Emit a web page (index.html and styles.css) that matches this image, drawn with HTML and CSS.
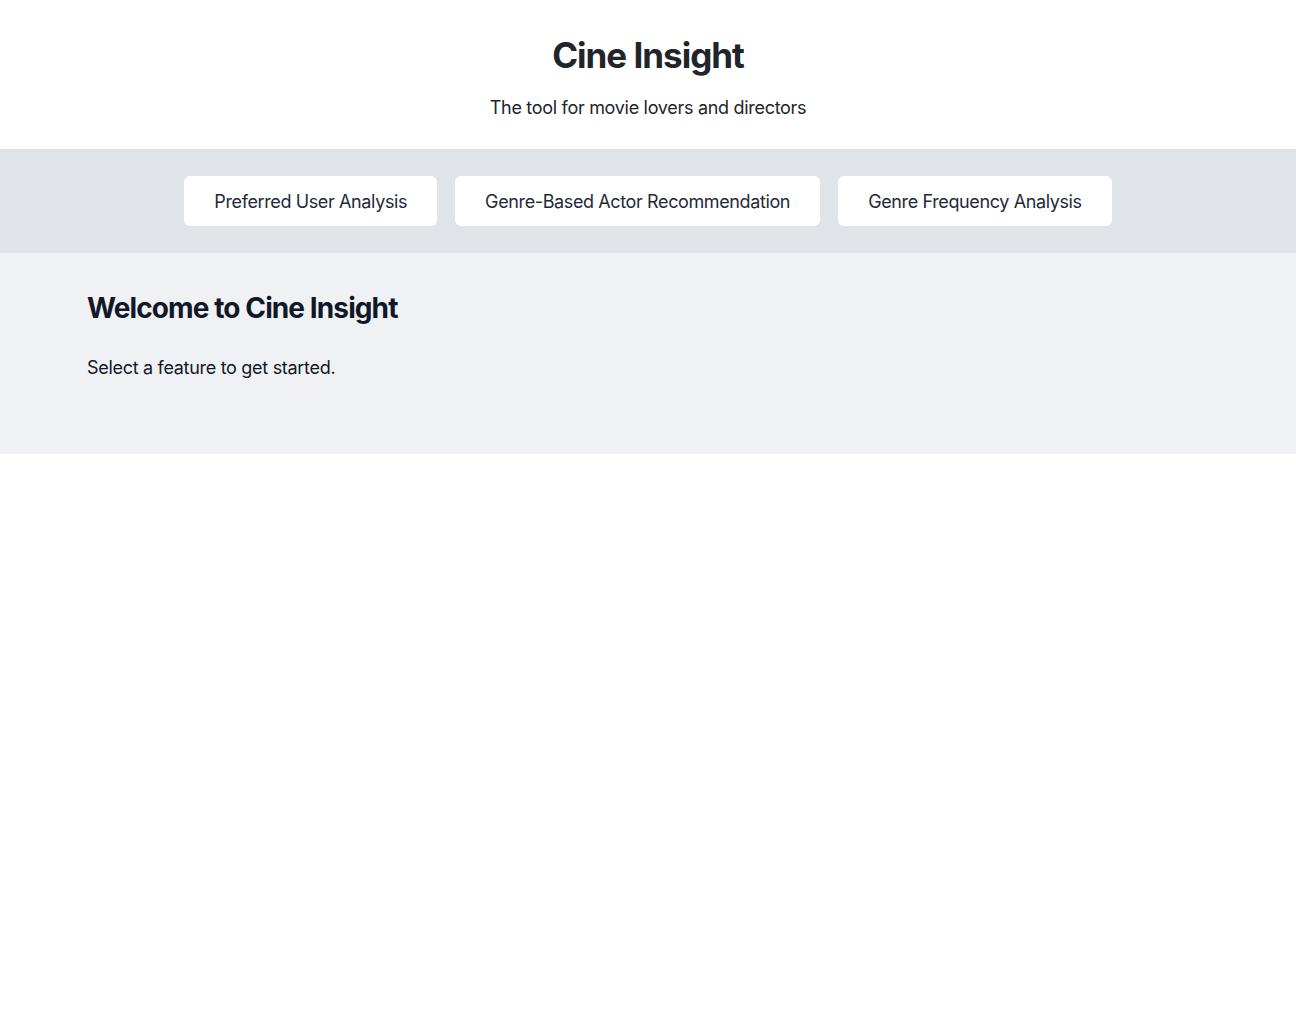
FILE: index.html
```html
<!DOCTYPE html>
<html lang="en">
<head>
<meta charset="utf-8">
<title>Cine Insight</title>
<link rel="stylesheet" href="styles.css">
</head>
<body>
<header class="site-header">
  <h1 class="site-title">Cine Insight</h1>
  <p class="site-subtitle">The tool for movie lovers and directors</p>
</header>
<nav class="feature-nav">
  <button class="feature-btn">Preferred User Analysis</button>
  <button class="feature-btn">Genre-Based Actor Recommendation</button>
  <button class="feature-btn">Genre Frequency Analysis</button>
</nav>
<main class="content">
  <div class="container">
    <h2 class="welcome-title">Welcome to Cine Insight</h2>
    <p class="welcome-text">Select a feature to get started.</p>
  </div>
</main>
</body>
</html>
```
FILE: styles.css
```css
* { box-sizing: border-box; }
html, body {
  margin: 0;
  padding: 0;
  background: #ffffff;
  font-family: Inter, "Noto Sans", sans-serif;
}
.site-header {
  text-align: center;
  padding: 33px 0 27px;
  background: #ffffff;
}
.site-title {
  margin: 0;
  font-size: 35px;
  line-height: 44px;
  font-weight: 700;
  color: #212529;
  letter-spacing: -1px;
}
.site-subtitle {
  margin: 17px 0 0;
  font-size: 18px;
  line-height: 28px;
  color: #212529;
  letter-spacing: -0.3px;
}
.feature-nav {
  display: flex;
  justify-content: center;
  gap: 18px;
  padding: 27px 0;
  background: #e0e4e9;
}
.feature-btn {
  font-family: Inter, "Noto Sans", sans-serif;
  font-size: 18px;
  line-height: 28px;
  letter-spacing: -0.38px;
  color: #1f2937;
  background: #ffffff;
  border: none;
  border-radius: 6px;
  padding: 12px 30px 10px;
  cursor: pointer;
}
.content {
  background: #f0f1f5;
  padding: 37px 0 72px;
}
.container {
  max-width: 1122px;
  margin: 0 auto;
}
.welcome-title {
  margin: 0;
  font-size: 28px;
  line-height: 36px;
  font-weight: 700;
  color: #111827;
  letter-spacing: -0.9px;
}
.welcome-text {
  margin: 28px 0 0;
  font-size: 18px;
  line-height: 28px;
  color: #111827;
  letter-spacing: -0.3px;
}
```
